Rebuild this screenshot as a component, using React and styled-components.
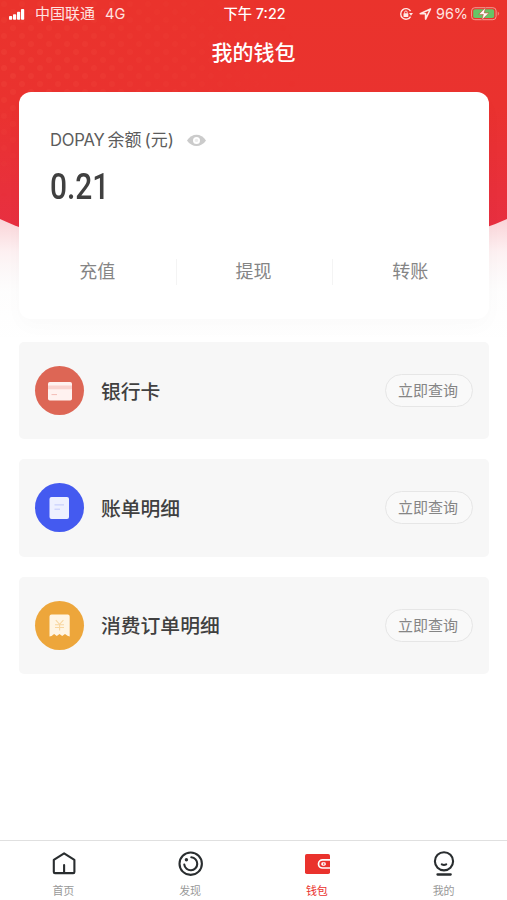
import styled, { createGlobalStyle } from "styled-components";

const colors = {
  red: "#ea322d",
  text: "#404040",
  label: "#5c5c5c",
  muted: "#858585",
  panel: "#f7f7f7",
  border: "#e6e6e6",
};

const GlobalStyle = createGlobalStyle`
  * {
    box-sizing: border-box;
  }

  body {
    margin: 0;
    background: #fff;
    color: ${colors.text};
    font-family: Inter, "Noto Sans CJK SC", sans-serif;
  }
`;

const Screen = styled.div`
  position: relative;
  display: flex;
  flex-direction: column;
  height: 900px;
  overflow: hidden;
  background: #fff;
`;

const Backdrop = styled.svg`
  position: absolute;
  top: 0;
  left: 0;
  width: 100%;
  height: 345px;
`;

const StatusBar = styled.div`
  position: relative;
  display: grid;
  grid-template-columns: 1fr auto 1fr;
  align-items: center;
  height: 28px;
  padding: 0 7px 0 9px;
  color: #ffe3e0;
  font-size: 15px;
  line-height: 28px;
`;

const Carrier = styled.div`
  display: flex;
  align-items: center;

  & > svg {
    margin-right: 9px;
  }

  & > span + span {
    margin-left: 10px;
    font-size: 14.5px;
  }
`;

const Clock = styled.div`
  color: #fff;
  font-size: 14.3px;
  font-weight: 500;
  white-space: nowrap;
`;

const Indicators = styled.div`
  display: flex;
  align-items: center;
  justify-content: flex-end;
  font-size: 14.4px;

  & > svg {
    flex: none;
  }

  & > svg:nth-child(2) {
    margin: 0 4px 0 6px;
  }

  & > svg:last-child {
    margin-left: 3px;
  }
`;

const Title = styled.h1`
  position: relative;
  margin: 0;
  padding-top: 5px;
  height: 64px;
  color: #fff;
  font-size: 21px;
  font-weight: 500;
  line-height: 40px;
  text-align: center;
`;

const BalanceCard = styled.section`
  position: relative;
  height: 227px;
  margin: 0 18px 0 19px;
  border-radius: 12px;
  background: #fff;
  box-shadow: 0 8px 20px rgba(0, 0, 0, 0.02);
`;

const BalanceLabel = styled.div`
  display: flex;
  align-items: center;
  padding: 36px 0 0 31px;
  color: ${colors.label};
  font-size: 17px;
  line-height: 24px;

  & > svg {
    margin-left: 13px;
  }
`;

const Latin = styled.span`
  margin-right: 3px;
  font-size: 16.6px;
  letter-spacing: -0.2px;
`;

const Unit = styled.span`
  margin-left: 3px;
`;

const Amount = styled.div`
  width: max-content;
  margin: 14px 0 0 31px;
  font-family: Roboto, sans-serif;
  font-size: 36.5px;
  font-weight: 500;
  line-height: 42px;
  transform: scaleX(0.82);
  transform-origin: left;
`;

const Actions = styled.div`
  display: grid;
  grid-template-columns: repeat(3, 1fr);
  margin-top: 51px;
`;

const Action = styled.div`
  height: 26px;
  color: ${colors.muted};
  font-size: 18px;
  line-height: 25px;
  text-align: center;

  & + & {
    padding-right: 2px;
    border-left: 1px solid #f4f4f4;
  }
`;

const Services = styled.div`
  position: relative;
  display: flex;
  flex-direction: column;
  gap: 20px;
  margin: 23px 18px 0 19px;
`;

const ServiceRow = styled.div`
  display: flex;
  align-items: center;
  height: 97.3px;
  padding: 0 16px;
  border-radius: 5px;
  background: ${colors.panel};
`;

const ServiceIcon = styled.div`
  display: flex;
  width: 49px;
  height: 49px;
  border-radius: 50%;
  background: ${(props) => props.$color};
`;

const ServiceName = styled.span`
  flex: 1;
  margin-left: 17px;
  padding-top: 2px;
  font-size: 19.8px;
  font-weight: 500;
  line-height: 28px;
`;

const QueryButton = styled.button`
  width: 88px;
  height: 33px;
  padding: 0 2px 0 0;
  border: 1px solid ${colors.border};
  border-radius: 17px;
  background: #f9f9f9;
  color: ${colors.muted};
  font-family: inherit;
  font-size: 15px;
  line-height: 31px;
`;

const TabBar = styled.nav`
  display: grid;
  grid-template-columns: repeat(4, 1fr);
  height: 60px;
  margin-top: auto;
  border-top: 1px solid #e0e0e0;
  background: #fff;
`;

const Tab = styled.div`
  display: flex;
  flex-direction: column;
  align-items: center;
  padding-top: 9px;
  color: ${(props) => (props.$active ? colors.red : "#999")};
  font-size: 11px;
  line-height: 16px;

  & > svg {
    margin-bottom: 5px;
  }
`;

function HeaderBackdrop() {
  return (
    <Backdrop viewBox="0 0 507 345" preserveAspectRatio="none">
      <defs>
        <linearGradient id="red" x1="0" y1="0" x2="0" y2="1">
          <stop offset="0" stopColor="#ea332c" />
          <stop offset="0.45" stopColor="#ea322f" />
          <stop offset="1" stopColor="#e72f42" />
        </linearGradient>
        <linearGradient id="glow" x1="0" y1="0" x2="0" y2="1">
          <stop offset="0" stopColor="#e72f42" stopOpacity="0.24" />
          <stop offset="0.3" stopColor="#e72f42" stopOpacity="0.07" />
          <stop offset="0.6" stopColor="#a08080" stopOpacity="0.015" />
          <stop offset="1" stopColor="#808080" stopOpacity="0" />
        </linearGradient>
        <pattern id="dots" width="18" height="16" patternUnits="userSpaceOnUse">
          <circle cx="4" cy="4" r="3" fill="#ff6a55" />
          <circle cx="13" cy="12" r="3" fill="#ff6a55" />
        </pattern>
        <radialGradient id="fade" cx="0" cy="0.3" r="0.6">
          <stop offset="0" stopColor="#fff" stopOpacity="0.15" />
          <stop offset="1" stopColor="#fff" stopOpacity="0" />
        </radialGradient>
        <mask id="dotsMask">
          <rect width="507" height="220" fill="url(#fade)" />
        </mask>
      </defs>
      <path d="M0 212L40 228H467L507 212V345H0Z" fill="url(#glow)" />
      <path d="M0 0H507V219Q496 224 487 227L460 236H47L19 227Q11 224 0 219Z" fill="url(#red)" />
      <rect width="507" height="219" fill="url(#dots)" mask="url(#dotsMask)" />
    </Backdrop>
  );
}

function SignalIcon() {
  return (
    <svg width="17" height="12" viewBox="0 0 17 12" fill="#fff">
      <rect x="0" y="8" width="3.2" height="3.8" rx="0.8" />
      <rect x="4" y="6.3" width="3.2" height="5.5" rx="0.8" />
      <rect x="8" y="3.8" width="3.2" height="8" rx="0.8" />
      <rect x="12" y="1" width="3.2" height="10.8" rx="0.8" />
    </svg>
  );
}

function RotationLockIcon() {
  return (
    <svg width="14" height="14" viewBox="0 0 14 14" fill="none" stroke="#ffe9e6" strokeWidth="1.4">
      <path d="M11.6 4.2A5.3 5.3 0 1 0 11.6 9.6" />
      <path d="M10 6.1h4l-2 2.6z" fill="#ffe9e6" stroke="none" />
      <rect x="4.5" y="6.3" width="4.8" height="3.7" rx="0.5" fill="#ffe9e6" stroke="none" />
      <path d="M5.6 6.5V5.3a1.3 1.3 0 0 1 2.6 0v1.2" strokeWidth="0.9" />
    </svg>
  );
}

function LocationIcon() {
  return (
    <svg width="13" height="13" viewBox="0 0 13 13" fill="none" stroke="#ffe9e6" strokeWidth="1.6" strokeLinejoin="round">
      <path d="M11.5 1L1.2 5.7H6.6V11.1Z" />
    </svg>
  );
}

function BatteryIcon() {
  return (
    <svg width="29" height="14" viewBox="0 0 29 14">
      <rect x="0.6" y="0.7" width="24.5" height="12" rx="3.2" fill="none" stroke="#f39a94" strokeWidth="1" />
      <path d="M26.7 4.6c2 .8 2 3.4 0 4.2z" fill="#f08078" />
      <rect x="2.2" y="2.3" width="21" height="8.8" rx="1.8" fill="#65c466" />
      <path d="M14.6 0.6L7.7 7.4h4.6l-1.6 5.7 7.2-7.2h-4.7z" fill="#fff" stroke="#c45a43" strokeWidth="0.7" />
    </svg>
  );
}

function EyeIcon() {
  return (
    <svg width="19" height="13" viewBox="0 0 19 13">
      <path d="M0 6.5C4.8-1.2 14.2-1.2 19 6.5 14.2 13.8 4.8 13.8 0 6.5z" fill="#cbcbcb" />
      <circle cx="9.5" cy="6.4" r="3.5" fill="#fff" />
      <circle cx="9.5" cy="6.4" r="1.7" fill="#ececec" />
    </svg>
  );
}

function CardIcon() {
  return (
    <svg width="49" height="49" viewBox="0 0 49 49">
      <rect x="13" y="16" width="24" height="18.5" rx="1.8" fill="#fff2f0" />
      <path d="M13 19.5h24v3.8H13z" fill="#fad3cf" />
      <path d="M16.5 28.6h5.5" stroke="#f3bcb5" strokeWidth="1" />
    </svg>
  );
}

function BillIcon() {
  return (
    <svg width="49" height="49" viewBox="0 0 49 49">
      <rect x="14.5" y="14" width="19.5" height="22" rx="2" fill="#edf0ff" />
      <path d="M19.5 21.9h9.5M19.5 26.2h5.5" stroke="#c0c9fb" strokeWidth="1" />
    </svg>
  );
}

function ReceiptIcon() {
  return (
    <svg width="49" height="49" viewBox="0 0 49 49">
      <path
        d="M14.5 15.5q0-2 2-2h16.2q2 0 2 2v20l-2.2-.7-2.5-1.7-2.8 2-2.7-2-2.7 2-2.7-2-2.5 1.9-2.1.5z"
        fill="#fff5e4"
      />
      <path d="M20.8 19.2l3.8 4.1 3.8-4.1M20 23.7h9M20 26.5h9M24.6 23.5v6" fill="none" stroke="#f8d6a0" strokeWidth="1.1" />
    </svg>
  );
}

function HomeIcon() {
  return (
    <svg width="28" height="28" viewBox="0 0 28 28" fill="none" stroke="#292d2f" strokeWidth="2.1" strokeLinecap="round" strokeLinejoin="round">
      <path d="M4.8 9.8L15.1 3.3 25.4 9.8V21.9Q25.4 23.1 24.2 23.1H6Q4.8 23.1 4.8 21.9Z" />
      <path d="M15.1 15v7.4" />
    </svg>
  );
}

function DiscoverIcon() {
  return (
    <svg width="28" height="28" viewBox="0 0 28 28" fill="none" stroke="#292d2f" strokeWidth="2.1" strokeLinecap="round">
      <circle cx="14.7" cy="13.7" r="11.2" />
      <path d="M15.3 7.3A6.5 6.5 0 1 1 8.3 14.6" />
      <circle cx="10.4" cy="9.7" r="1.7" fill="#292d2f" stroke="none" />
    </svg>
  );
}

function WalletIcon() {
  return (
    <svg width="28" height="28" viewBox="0 0 28 28">
      <rect x="2" y="4" width="25" height="20" rx="1.8" fill={colors.red} />
      <path d="M28 9.8H19.6a4.1 4.1 0 0 0 0 8.2H28" fill={colors.red} stroke="#fff" strokeWidth="1.7" />
      <rect x="18.3" y="12.3" width="4.5" height="3.4" rx="1.4" fill="#fff" />
      <circle cx="20.7" cy="14" r="0.8" fill={colors.red} />
      <path d="M27 3h1v22h-1z" fill="#fff" />
    </svg>
  );
}

function ProfileIcon() {
  return (
    <svg width="28" height="28" viewBox="0 0 28 28" fill="none" stroke="#292d2f" strokeWidth="2.1" strokeLinecap="round">
      <circle cx="14" cy="11.3" r="9.1" />
      <path d="M11.8 14.4q2.2 1.3 4.4 0" />
      <path d="M7.5 24.5h13.2" strokeWidth="2.3" />
    </svg>
  );
}

const actions = ["充值", "提现", "转账"];

const services = [
  { name: "银行卡", color: "#dd6655", Icon: CardIcon },
  { name: "账单明细", color: "#445af0", Icon: BillIcon },
  { name: "消费订单明细", color: "#eda63b", Icon: ReceiptIcon },
];

const tabs = [
  { name: "首页", Icon: HomeIcon },
  { name: "发现", Icon: DiscoverIcon },
  { name: "钱包", Icon: WalletIcon, active: true },
  { name: "我的", Icon: ProfileIcon },
];

function App() {
  return (
    <>
      <GlobalStyle />
      <Screen>
        <HeaderBackdrop />
        <StatusBar>
          <Carrier>
            <SignalIcon />
            <span>中国联通</span>
            <span>4G</span>
          </Carrier>
          <Clock>下午 7:22</Clock>
          <Indicators>
            <RotationLockIcon />
            <LocationIcon />
            <span>96%</span>
            <BatteryIcon />
          </Indicators>
        </StatusBar>
        <Title>我的钱包</Title>
        <BalanceCard>
          <BalanceLabel>
            <Latin>DOPAY</Latin>
            <span>余额</span>
            <Unit>(元)</Unit>
            <EyeIcon />
          </BalanceLabel>
          <Amount>0.21</Amount>
          <Actions>
            {actions.map((name) => (
              <Action key={name}>{name}</Action>
            ))}
          </Actions>
        </BalanceCard>
        <Services>
          {services.map(({ name, color, Icon }) => (
            <ServiceRow key={name}>
              <ServiceIcon $color={color}>
                <Icon />
              </ServiceIcon>
              <ServiceName>{name}</ServiceName>
              <QueryButton>立即查询</QueryButton>
            </ServiceRow>
          ))}
        </Services>
        <TabBar>
          {tabs.map(({ name, Icon, active }) => (
            <Tab key={name} $active={active}>
              <Icon />
              <span>{name}</span>
            </Tab>
          ))}
        </TabBar>
      </Screen>
    </>
  );
}

export default App;
